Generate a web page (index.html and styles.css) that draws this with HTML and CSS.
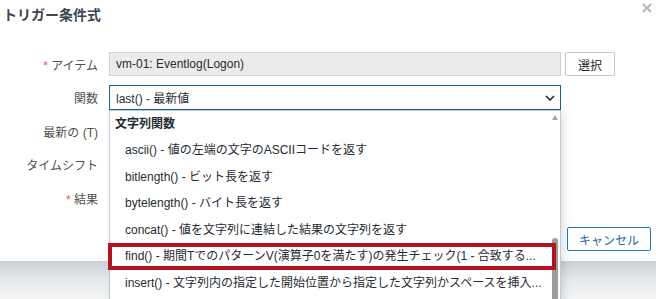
FILE: index.html
```html
<!DOCTYPE html>
<html lang="ja">
<head>
<meta charset="utf-8">
<title>トリガー条件式</title>
<link rel="stylesheet" href="styles.css">
</head>
<body>
<div class="page">
  <div class="dialog">
    <div class="header">
      <h1 class="title">トリガー条件式</h1>
      <span class="close">
        <svg width="10" height="10" viewBox="0 0 10 10"><path d="M1 1L9 9M9 1L1 9" stroke="#a9b4bc" stroke-width="1.8" fill="none"/></svg>
      </span>
    </div>
    <div class="form">
      <div class="row">
        <label class="label"><span class="req">*</span> アイテム</label>
        <div class="input readonly">vm-01: Eventlog(Logon)</div>
        <button class="btn">選択</button>
      </div>
      <div class="row">
        <label class="label">関数</label>
        <div class="input select">
          <span>last() - 最新値</span>
          <svg class="chev" width="10" height="6" viewBox="0 0 10 6"><path d="M1 1L5 5L9 1" stroke="#1f2c33" stroke-width="1.6" fill="none"/></svg>
        </div>
      </div>
      <div class="row"><label class="label">最新の (T)</label></div>
      <div class="row"><label class="label">タイムシフト</label></div>
      <div class="row"><label class="label"><span class="req">*</span> 結果</label></div>
    </div>
    <div class="footer">
      <button class="btn cancel">キャンセル</button>
    </div>
  </div>
  <div class="shade"></div>

  <div class="dropdown">
    <div class="group">文字列関数</div>
    <div class="item">ascii() - 値の左端の文字のASCIIコードを返す</div>
    <div class="item">bitlength() - ビット長を返す</div>
    <div class="item">bytelength() - バイト長を返す</div>
    <div class="item">concat() - 値を文字列に連結した結果の文字列を返す</div>
    <div class="item focused">find() - 期間TでのパターンV(演算子0を満たす)の発生チェック(1 - 合致する...</div>
    <div class="item">insert() - 文字列内の指定した開始位置から指定した文字列かスペースを挿入...</div>
    <div class="scrollbar">
      <span class="arrow"></span>
      <span class="thumb"></span>
    </div>
  </div>
</div>
</body>
</html>
```

FILE: styles.css
```css
html, body {
  margin: 0;
  padding: 0;
}
body {
  font-family: Arial, "Liberation Sans", "Noto Sans CJK JP", sans-serif;
  font-size: 12px;
  color: #1f2c33;
}
.page {
  width: 656px;
  height: 299px;
  position: relative;
  overflow: hidden;
  background: #fff;
}
.dialog {
  height: 261px;
  background: #fff;
  display: flex;
  flex-direction: column;
}
.header {
  height: 28px;
  display: flex;
  align-items: center;
  justify-content: space-between;
  padding: 0 4px 0 3px;
}
.title {
  margin: 0;
  font-size: 14px;
  font-weight: bold;
  color: #3a4753;
}
.close {
  display: flex;
  align-self: flex-start;
  margin-top: 3px;
}
.form {
  padding-top: 24px;
  display: flex;
  flex-direction: column;
  gap: 9.6px;
}
.row {
  display: flex;
  align-items: center;
  height: 24px;
}
.label {
  width: 98px;
  text-align: right;
  padding-right: 11px;
  color: #4f4f4f;
  flex: none;
}
.req {
  color: #e45959;
}
.input {
  box-sizing: border-box;
  width: 452px;
  height: 24px;
  display: flex;
  align-items: center;
  padding: 0 6px;
  border: 1px solid #cdd3d8;
}
.readonly {
  background: #ebebeb;
}
.select {
  border-color: #16629f;
  justify-content: space-between;
  padding-right: 5px;
  height: 25px;
}
.btn {
  font: inherit;
  box-sizing: border-box;
  height: 24px;
  margin-left: 4px;
  padding: 0 12px;
  background: #fff;
  border: 1px solid #c3c9ce;
  border-radius: 2px;
  color: #1f2c33;
  white-space: nowrap;
}
.footer {
  margin-top: auto;
  height: 34px;
  display: flex;
  justify-content: flex-end;
  align-items: flex-start;
  padding-right: 5px;
}
.cancel {
  width: 84px;
  padding: 0;
  border-color: #1f77bb;
  color: #1f6aa8;
}
.shade {
  height: 38px;
  background: linear-gradient(#c9cfd4, #e4e8eb 45%, #f3f4f5);
}
.dropdown {
  position: absolute;
  left: 109px;
  top: 110px;
  width: 452px;
  height: 200px;
  box-sizing: border-box;
  border: 1px solid #c2c9cf;
  background: #fff;
  box-shadow: 3px 2px 8px rgba(0, 0, 0, 0.12);
}
.group {
  height: 26px;
  line-height: 26px;
  padding-left: 5px;
  font-weight: bold;
}
.item {
  height: 26.5px;
  line-height: 26.5px;
  padding: 0 14px 0 15px;
  white-space: nowrap;
  color: #1f2c33;
  position: relative;
}
.focused {
  margin-left: -2px;
  margin-right: 4px;
  padding-left: 17px;
  outline: 4px solid #b1141f;
  outline-offset: -4px;
  z-index: 2;
}
.scrollbar {
  position: absolute;
  right: 0;
  top: 0;
  bottom: 0;
  width: 9px;
  background: #fff;
}
.arrow {
  position: absolute;
  left: 1px;
  top: 4px;
  width: 0;
  height: 0;
  border-left: 3.5px solid transparent;
  border-right: 3.5px solid transparent;
  border-bottom: 5px solid #a3a3a3;
}
.thumb {
  position: absolute;
  left: 1px;
  top: 127px;
  width: 6px;
  bottom: 0;
  border-radius: 3px;
  background: #9d9d9d;
}
```
